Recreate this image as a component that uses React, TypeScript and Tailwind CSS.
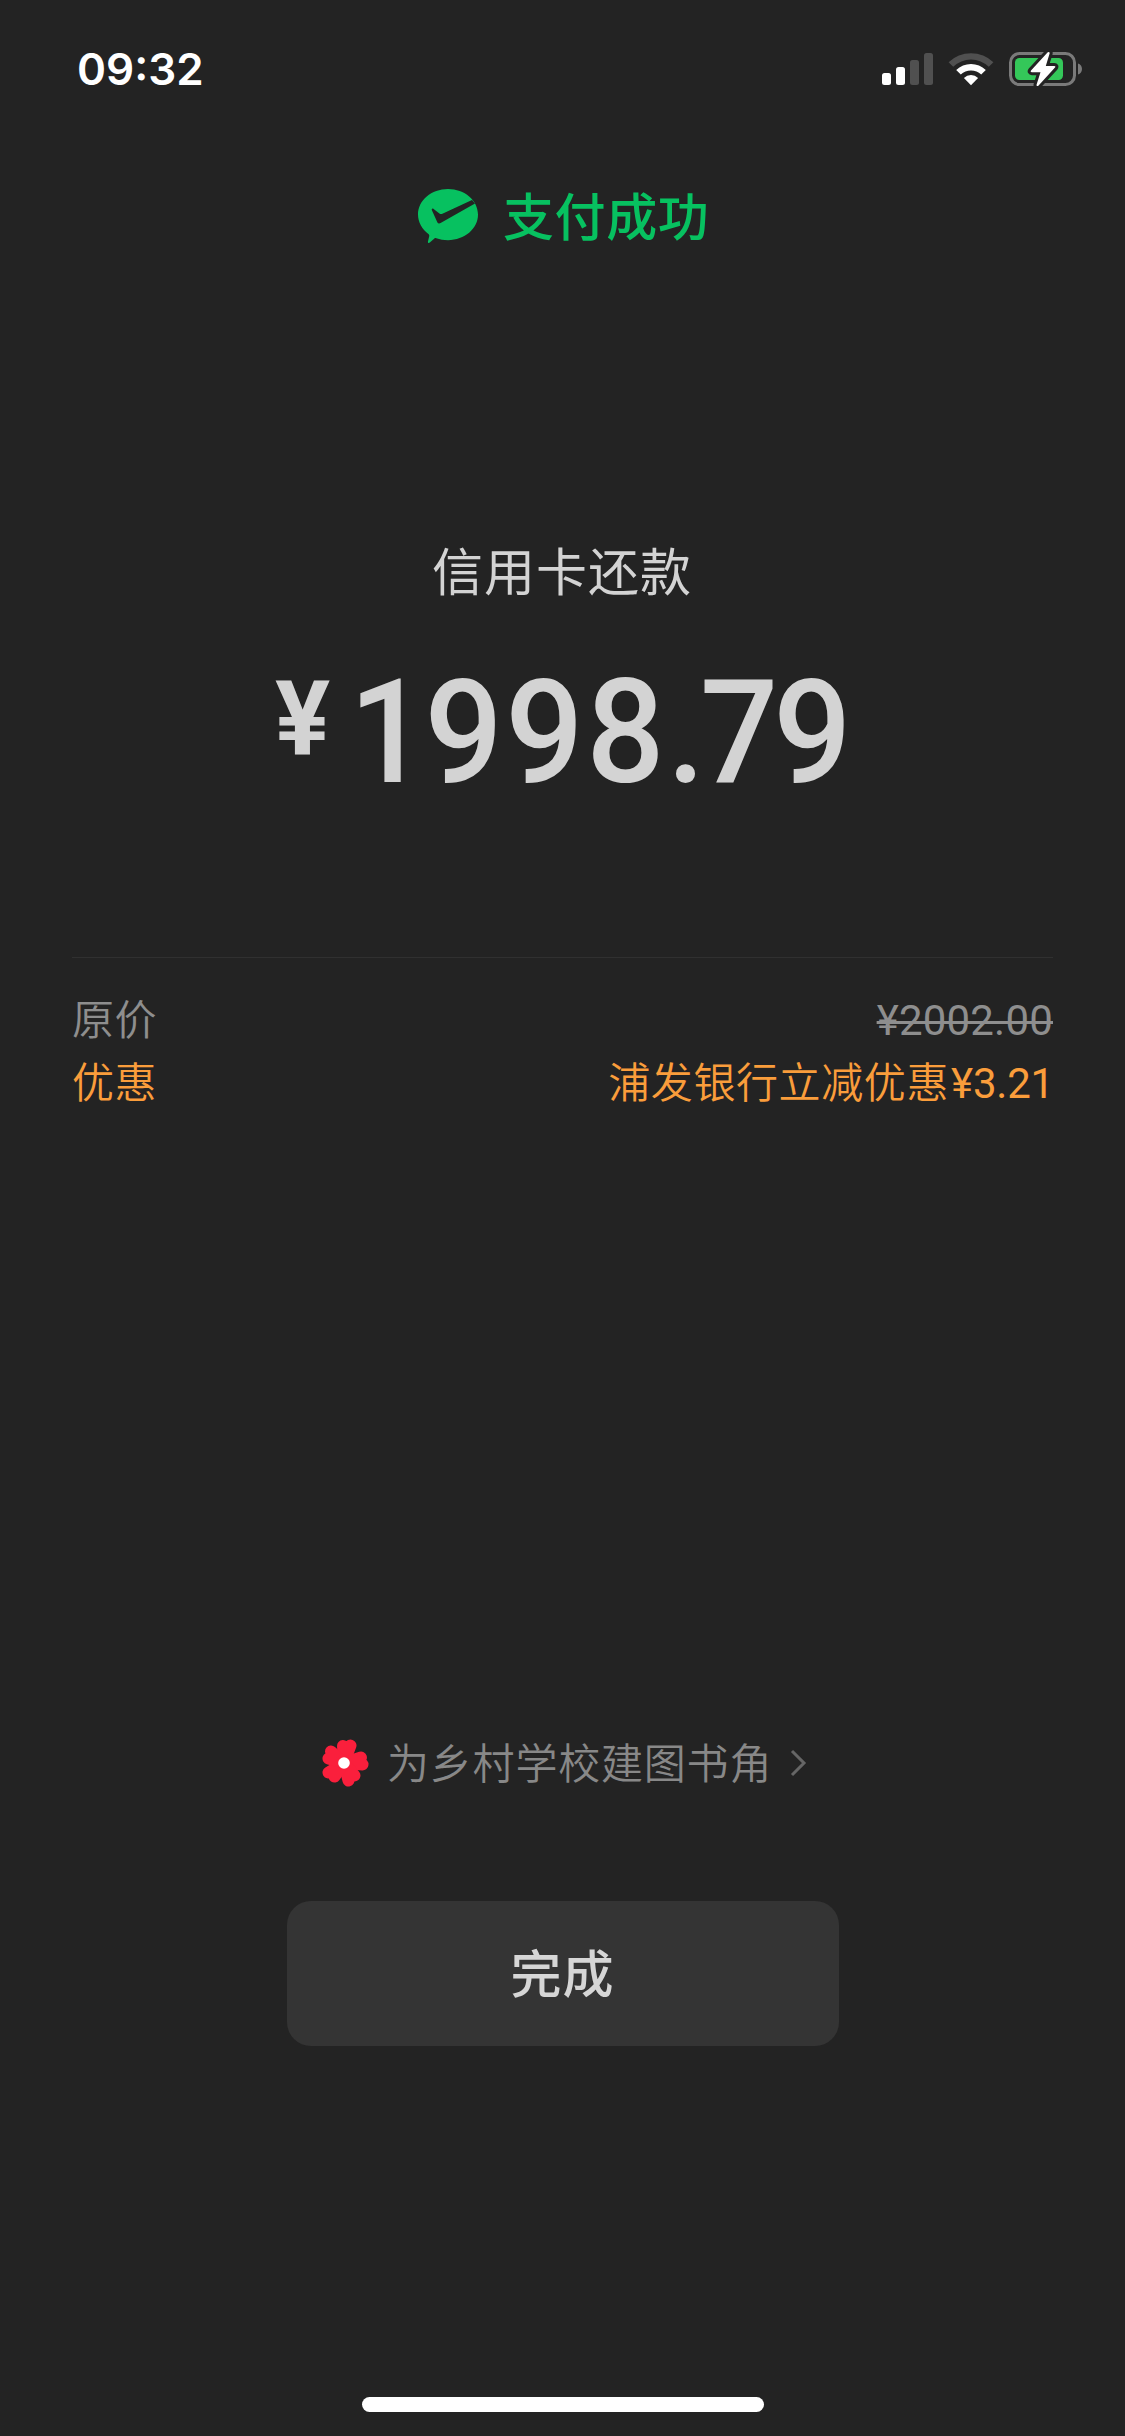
const details = [
  { label: "原价", text: "", price: "¥2002.00", color: "text-[#8e8e8e]", strike: true },
  { label: "优惠", text: "浦发银行立减优惠", price: "¥3.21", color: "text-[#fa9d3b]", strike: false },
];

const petals = [
  "M0 0L-1 -17M0 0L6.5 -17.5",
  "M0 0L17 -5.5M0 0L18.5 1.5",
  "M0 0L4.5 17.5M0 0L10.5 12.5",
  "M0 0L-15.5 9.5M0 0L-9.5 13.5",
  "M0 0L-15.5 -4.5M0 0L-13 -11.5",
];

const SignalIcon = () => (
  <svg width="51" height="32" viewBox="0 0 51 32">
    <rect x="0" y="20" width="9" height="12" rx="2.5" fill="#fff" />
    <rect x="14" y="14" width="9" height="18" rx="2.5" fill="#fff" />
    <rect x="28" y="7" width="9" height="25" rx="2.5" fill="#505050" />
    <rect x="42" y="0" width="9" height="32" rx="2.5" fill="#505050" />
  </svg>
);

const WifiIcon = () => (
  <svg width="46" height="34" viewBox="0 0 46 34">
    <path d="M0.6 10.2A32.2 32.2 0 0 1 45.4 10.2L40.8 14.8A25.6 25.6 0 0 0 5.2 14.8Z" fill="#505050" />
    <path d="M8.2 17.9A21.3 21.3 0 0 1 37.8 17.9L33.2 22.5A14.7 14.7 0 0 0 12.8 22.5Z" fill="#fff" />
    <path d="M15.9 25.9A10.3 10.3 0 0 1 30.1 25.9L23 33.2Z" fill="#fff" />
  </svg>
);

const BatteryIcon = () => (
  <svg width="74" height="38" viewBox="0 0 74 38">
    <rect x="1.5" y="3.5" width="64" height="31" rx="9" fill="none" stroke="#7a7a7a" strokeWidth="3" />
    <path d="M69 13.5C71.5 14.3 73 16.5 73 19S71.5 23.7 69 24.5Z" fill="#7a7a7a" />
    <rect x="6" y="8" width="48" height="22" rx="4.5" fill="#34c759" />
    <path
      d="M38.5 2.5L22 20.5C21.3 21.4 21.8 22.2 22.8 22.2H31.5L27.6 34.5C27.2 36 28.6 36.6 29.6 35.5L46 17.6C46.8 16.7 46.3 15.9 45.3 15.9H36.8L40.6 3.6C41 2.1 39.5 1.4 38.5 2.5Z"
      fill="#fff"
      stroke="#232323"
      strokeWidth="6"
      strokeLinejoin="round"
      paintOrder="stroke"
    />
  </svg>
);

const PayIcon = () => (
  <svg width="60" height="55" viewBox="0 0 60 55">
    <path
      d="M30 0C46.6 0 60 11.4 60 25.6S46.6 51.2 30 51.2C25.8 51.2 21.9 50.5 18.3 49.2C17.5 49 17 49.1 16.4 49.5L11.8 53.6C10.8 54.4 9.8 54 9.9 52.8L11.2 47.2C11.4 46.3 11.2 45.6 10.4 44.9C4 40.2 0 33.3 0 25.6C0 11.4 13.4 0 30 0Z"
      fill="#07c160"
    />
    <path
      d="M54 11L24.4 24.7C23.3 25.2 22.3 25.1 21.4 24.4L15.6 19.9C14.4 19 13.4 19.9 13.9 21.2L19.2 32.9C19.8 34.4 21.2 34.8 22.6 34L57 14.4Z"
      fill="#232323"
    />
  </svg>
);

const FlowerIcon = () => (
  <svg width="47" height="48" viewBox="-22 -24 47 48">
    {petals.map((d) => (
      <path key={d} d={d} stroke="#fa1f3c" strokeWidth="12" strokeLinecap="round" />
    ))}
    <circle r="5.8" fill="#fff" />
  </svg>
);

const StatusBar = () => (
  <header className="flex h-[138px] items-center justify-between pl-[77px] pr-[42px]">
    <span className="font-[Inter,sans-serif] text-[44px] font-semibold leading-none text-white">09:32</span>
    <div className="flex items-center">
      <SignalIcon />
      <div className="ml-[15px]">
        <WifiIcon />
      </div>
      <div className="ml-[15px]">
        <BatteryIcon />
      </div>
    </div>
  </header>
);

const Amount = () => (
  <div className="mt-[43px] flex h-[160px] pl-[275px] font-[Roboto,sans-serif] text-[#d3d3d3]">
    <span className="mt-[7px] w-[74px] text-[103px] font-bold leading-[120px]">¥</span>
    <p className="origin-left scale-x-[0.95] text-[145px] font-medium leading-[160px]">
      <span className="tracking-[-3px]">1</span>
      <span className="tracking-[2.7px]">998</span>
      <span className="tracking-[-5.5px]">.79</span>
    </p>
  </div>
);

export default function App() {
  return (
    <div className="flex h-[2436px] w-[1125px] flex-col overflow-hidden bg-[#232323] font-['Noto_Sans_CJK_SC',sans-serif]">
      <StatusBar />
      <div className="mt-[36px] flex h-[84px] items-center pl-[418px] text-[#07c160]">
        <PayIcon />
        <h1 className="mb-[5px] ml-[25px] text-[51px] font-medium leading-[80px] tracking-[0.6px]">支付成功</h1>
      </div>

      <main>
        <p className="mt-[271px] pl-[432px] text-[51px] leading-[80px] tracking-[1px] text-[#d3d3d3]">信用卡还款</p>
        <Amount />
        <div className="mx-[72px] mt-[145px] border-t border-[#303030] pt-[27px]">
          {details.map(({ label, text, price, color, strike }) => (
            <div key={label} className={`flex h-[63px] justify-between text-[42px] leading-[63px] tracking-[0.6px] ${color}`}>
              <span className="font-[350]">{label}</span>
              <div className="flex">
                <span className="font-[350]">{text}</span>
                <span className={`mt-[4px] font-[Roboto,sans-serif] ${strike ? "tracking-[0.2px] line-through decoration-[3px]" : "-mr-[1px] ml-[2px] tracking-[-0.2px]"}`}>
                  {price}
                </span>
              </div>
            </div>
          ))}
        </div>
      </main>

      <footer className="mt-[617px] flex flex-col items-center">
        <a className="flex h-[70px] items-center self-start pl-[322px] text-[#888888]">
          <FlowerIcon />
          <span className="mb-[5px] ml-[18px] text-[42px] font-[350] leading-[64px] tracking-[0.8px]">为乡村学校建图书角</span>
          <svg className="ml-[18px]" width="17" height="28" viewBox="0 0 17 28" fill="none">
            <path d="M2 2L14 14L2 26" stroke="#666" strokeWidth="3" />
          </svg>
        </a>
        <button className="mt-[103px] h-[145px] w-[552px] rounded-[24px] bg-[#343434] pb-[5px] text-[51px] font-medium tracking-[1px] text-[#d6d6d6]">
          完成
        </button>
      </footer>
      <div className="mx-auto mb-[24px] mt-auto h-[15px] w-[402px] rounded-full bg-white" />
    </div>
  );
}
